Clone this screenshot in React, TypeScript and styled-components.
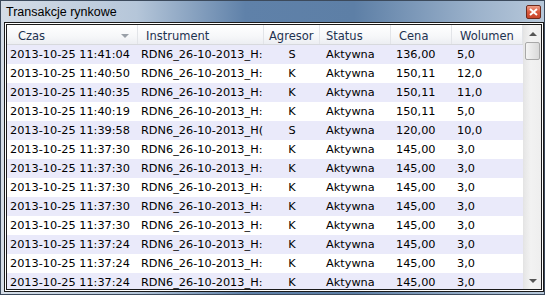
import React from 'react';
import styled, { createGlobalStyle } from 'styled-components';

const GlobalStyle = createGlobalStyle`
  html, body {
    margin: 0;
    padding: 0;
    background: #ffffff;
  }
`;

const Window = styled.div`
  width: 545px;
  height: 295px;
  display: flex;
  flex-direction: column;
  box-sizing: border-box;
  border: 1px solid #3c4a5c;
  background: linear-gradient(90deg, #d5dde7 0%, #b5c6d9 25%, #5f81a9 45%, #5d7fa6 65%, #9db3cc 88%, #b7c8da 100%);
  font-family: 'DejaVu Sans', Verdana, sans-serif;
  overflow: hidden;
`;

const TitleBar = styled.div`
  height: 21px;
  flex-shrink: 0;
  display: flex;
  align-items: center;
  justify-content: space-between;
  padding: 0 3px 0 5px;
`;

const Title = styled.span`
  font-family: 'Liberation Sans', Arial, sans-serif;
  font-size: 12.5px;
  color: #000;
`;

const CloseButton = styled.div`
  width: 15px;
  height: 14px;
  box-sizing: border-box;
  border: 1px solid #6d2a1c;
  border-radius: 2px;
  background: linear-gradient(180deg, #eea08a 0%, #d9583c 50%, #c7452b 100%);
  display: flex;
  align-items: center;
  justify-content: center;
`;

const Body = styled.div`
  flex: 1;
  display: flex;
  padding: 0 3px 2px 3px;
  min-height: 0;
`;

const Frame = styled.div`
  flex: 1;
  display: flex;
  border: 3px double #1a1a1a;
  background: #ffffff;
  min-height: 0;
`;

const Grid = styled.div`
  flex: 1;
  overflow: hidden;
  background: #ffffff;
`;

const cols = '131px 126px 56px 71px 61px 71px';

const HeaderRow = styled.div`
  display: grid;
  grid-template-columns: ${cols};
  height: 19px;
  background: linear-gradient(180deg, #ffffff 0%, #f6f7f9 60%, #eceef2 100%);
  border-bottom: 1px solid #d7d9dd;
`;

const HeaderCell = styled.div<{ $pad?: number }>`
  display: flex;
  align-items: flex-end;
  padding: 0 6px 1px ${({ $pad }) => $pad ?? 8}px;
  border-right: 1px solid #e2e4e8;
  font-size: 11.5px;
  color: #1e3250;
  white-space: nowrap;
  position: relative;
`;

const SortArrow = styled.span`
  position: absolute;
  right: 8px;
  top: 9px;
  width: 0;
  height: 0;
  border-left: 4px solid transparent;
  border-right: 4px solid transparent;
  border-top: 4px solid #9aa0a8;
`;

const Row = styled.div<{ $alt: boolean }>`
  display: grid;
  grid-template-columns: ${cols};
  height: 19px;
  background: ${({ $alt }) => ($alt ? '#eaeafa' : '#ffffff')};
`;

const Cell = styled.div<{ $align?: string; $pad?: number }>`
  display: flex;
  align-items: center;
  justify-content: ${({ $align }) => $align || 'flex-start'};
  padding-left: ${({ $pad }) => $pad ?? 3}px;
  font-size: 11.3px;
  color: #000;
  white-space: nowrap;
  overflow: hidden;
`;

const ScrollBar = styled.div`
  width: 17px;
  flex-shrink: 0;
  display: flex;
  flex-direction: column;
  background: linear-gradient(90deg, #e6e6e6 0%, #f2f2f2 40%, #eeeeee 100%);
  border-left: 1px solid #e4e4e4;
`;

const ArrowButton = styled.div`
  height: 17px;
  display: flex;
  align-items: center;
  justify-content: center;
`;

const Thumb = styled.div`
  margin: 0 1px;
  height: 16px;
  border: 1px solid #a8a8a8;
  border-radius: 2px;
  background: linear-gradient(90deg, #f4f4f4 0%, #e6e6e6 50%, #d9d9d9 100%);
`;

const Track = styled.div`
  flex: 1;
`;

const Tri = styled.span<{ $up?: boolean }>`
  width: 0;
  height: 0;
  border-left: 4px solid transparent;
  border-right: 4px solid transparent;
  ${({ $up }) => ($up ? 'border-bottom: 4px solid #555;' : 'border-top: 4px solid #555;')}
`;

type Trade = {
  time: string;
  instrument: string;
  side: string;
  price: string;
  volume: string;
};

const trades: Trade[] = [
  { time: '2013-10-25 11:41:04', instrument: 'RDN6_26-10-2013_H:', side: 'S', price: '136,00', volume: '5,0' },
  { time: '2013-10-25 11:40:50', instrument: 'RDN6_26-10-2013_H:', side: 'K', price: '150,11', volume: '12,0' },
  { time: '2013-10-25 11:40:35', instrument: 'RDN6_26-10-2013_H:', side: 'K', price: '150,11', volume: '11,0' },
  { time: '2013-10-25 11:40:19', instrument: 'RDN6_26-10-2013_H:', side: 'K', price: '150,11', volume: '5,0' },
  { time: '2013-10-25 11:39:58', instrument: 'RDN6_26-10-2013_H(', side: 'S', price: '120,00', volume: '10,0' },
  { time: '2013-10-25 11:37:30', instrument: 'RDN6_26-10-2013_H:', side: 'K', price: '145,00', volume: '3,0' },
  { time: '2013-10-25 11:37:30', instrument: 'RDN6_26-10-2013_H:', side: 'K', price: '145,00', volume: '3,0' },
  { time: '2013-10-25 11:37:30', instrument: 'RDN6_26-10-2013_H:', side: 'K', price: '145,00', volume: '3,0' },
  { time: '2013-10-25 11:37:30', instrument: 'RDN6_26-10-2013_H:', side: 'K', price: '145,00', volume: '3,0' },
  { time: '2013-10-25 11:37:30', instrument: 'RDN6_26-10-2013_H:', side: 'K', price: '145,00', volume: '3,0' },
  { time: '2013-10-25 11:37:24', instrument: 'RDN6_26-10-2013_H:', side: 'K', price: '145,00', volume: '3,0' },
  { time: '2013-10-25 11:37:24', instrument: 'RDN6_26-10-2013_H:', side: 'K', price: '145,00', volume: '3,0' },
  { time: '2013-10-25 11:37:24', instrument: 'RDN6_26-10-2013_H:', side: 'K', price: '145,00', volume: '3,0' },
];

export default function App() {
  return (
    <>
      <GlobalStyle />
      <Window>
        <TitleBar>
          <Title>Transakcje rynkowe</Title>
          <CloseButton>
            <svg width="9" height="8" viewBox="0 0 9 8">
              <path d="M1 1 L8 7 M8 1 L1 7" stroke="#ffffff" strokeWidth="2" />
            </svg>
          </CloseButton>
        </TitleBar>
        <Body>
          <Frame>
            <Grid>
              <HeaderRow>
                <HeaderCell $pad={11}>
                  Czas
                  <SortArrow />
                </HeaderCell>
                <HeaderCell>Instrument</HeaderCell>
                <HeaderCell $pad={5}>Agresor</HeaderCell>
                <HeaderCell $pad={6}>Status</HeaderCell>
                <HeaderCell $pad={8}>Cena</HeaderCell>
                <HeaderCell $pad={8}>Wolumen</HeaderCell>
              </HeaderRow>
              {trades.map((t, i) => (
                <Row key={i} $alt={i % 2 === 0}>
                  <Cell>{t.time}</Cell>
                  <Cell>{t.instrument}</Cell>
                  <Cell $align="center" $pad={0}>{t.side}</Cell>
                  <Cell $pad={6}>Aktywna</Cell>
                  <Cell $pad={5}>{t.price}</Cell>
                  <Cell $pad={5}>{t.volume}</Cell>
                </Row>
              ))}
            </Grid>
            <ScrollBar>
              <ArrowButton>
                <Tri $up />
              </ArrowButton>
              <Thumb />
              <Track />
              <ArrowButton>
                <Tri />
              </ArrowButton>
            </ScrollBar>
          </Frame>
        </Body>
      </Window>
    </>
  );
}
